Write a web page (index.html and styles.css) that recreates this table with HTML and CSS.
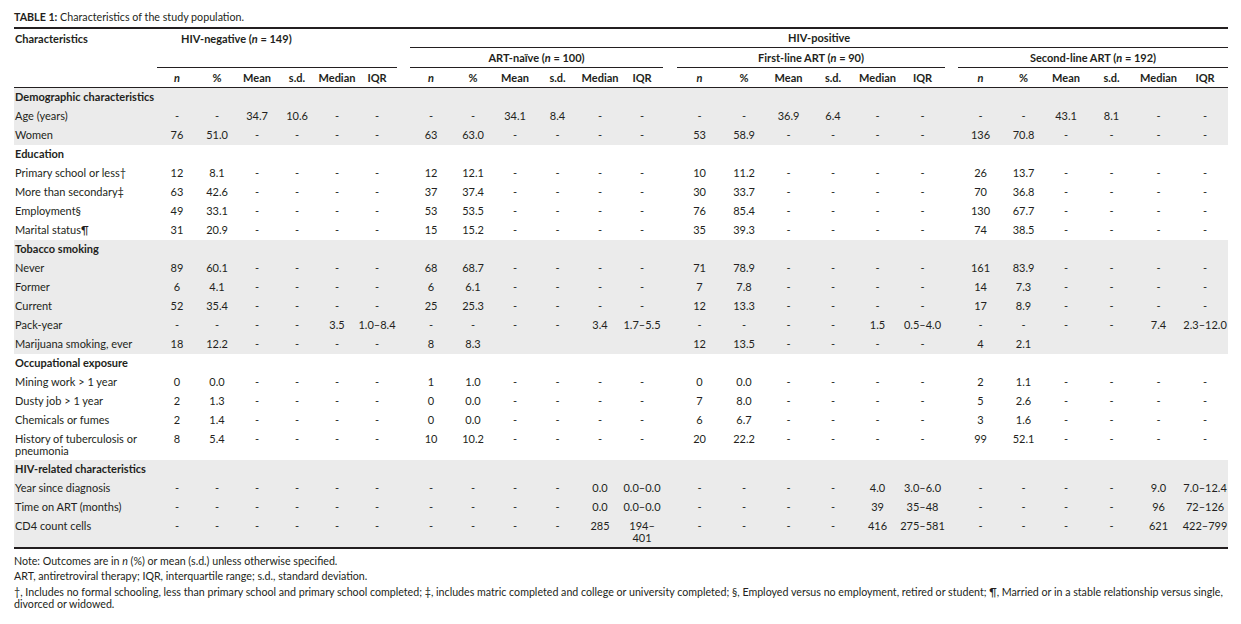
FILE: index.html
```html
<!DOCTYPE html>
<html lang="en">
<head>
<meta charset="utf-8">
<title>Table 1</title>
<link rel="stylesheet" href="styles.css">
</head>
<body>
<div class="page">
  <p class="title"><b>TABLE 1:</b> Characteristics of the study population.</p>
  <table class="data">
    <colgroup>
      <col class="w-char">
      <col class="w40"><col class="w40"><col class="w40"><col class="w40"><col class="w40"><col class="w40">
      <col class="w13">
      <col class="w42"><col class="w42"><col class="w42"><col class="w43"><col class="w42"><col class="w42">
      <col class="w14">
      <col class="w45"><col class="w44"><col class="w45"><col class="w44"><col class="w45"><col class="w45">
      <col class="w13">
      <col class="w45"><col class="w41"><col class="w44"><col class="w47"><col class="w47"><col class="w46">
    </colgroup>
    <thead>
      <tr class="h1">
        <th rowspan="3" class="left top ruled">Characteristics</th>
        <th colspan="6" rowspan="2" class="top ruled neg">HIV-negative (<i>n</i> = 149)</th>
        <th rowspan="2"></th>
        <th colspan="20" class="ruled">HIV-positive</th>
      </tr>
      <tr class="h2">
        <th colspan="6" class="ruled">ART-naïve (<i>n</i> = 100)</th>
        <th></th>
        <th colspan="6" class="ruled">First-line ART (<i>n</i> = 90)</th>
        <th></th>
        <th colspan="6" class="ruled">Second-line ART (<i>n</i> = 192)</th>
      </tr>
      <tr class="h3">
        <th class="ruled"><i>n</i></th><th class="ruled">%</th><th class="ruled">Mean</th><th class="ruled">s.d.</th><th class="ruled">Median</th><th class="ruled">IQR</th>
        <th class="ruled"></th>
        <th class="ruled"><i>n</i></th><th class="ruled">%</th><th class="ruled">Mean</th><th class="ruled">s.d.</th><th class="ruled">Median</th><th class="ruled">IQR</th>
        <th class="ruled"></th>
        <th class="ruled"><i>n</i></th><th class="ruled">%</th><th class="ruled">Mean</th><th class="ruled">s.d.</th><th class="ruled">Median</th><th class="ruled">IQR</th>
        <th class="ruled"></th>
        <th class="ruled"><i>n</i></th><th class="ruled">%</th><th class="ruled">Mean</th><th class="ruled">s.d.</th><th class="ruled">Median</th><th class="ruled">IQR</th>
      </tr>
    </thead>
    <tbody class="shade">
      <tr><td colspan="28" class="cat">Demographic characteristics</td></tr>
      <tr><td class="lab">Age (years)</td><td>-</td><td>-</td><td>34.7</td><td>10.6</td><td>-</td><td>-</td><td></td><td>-</td><td>-</td><td>34.1</td><td>8.4</td><td>-</td><td>-</td><td></td><td>-</td><td>-</td><td>36.9</td><td>6.4</td><td>-</td><td>-</td><td></td><td>-</td><td>-</td><td>43.1</td><td>8.1</td><td>-</td><td>-</td></tr>
      <tr><td class="lab">Women</td><td>76</td><td>51.0</td><td>-</td><td>-</td><td>-</td><td>-</td><td></td><td>63</td><td>63.0</td><td>-</td><td>-</td><td>-</td><td>-</td><td></td><td>53</td><td>58.9</td><td>-</td><td>-</td><td>-</td><td>-</td><td></td><td>136</td><td>70.8</td><td>-</td><td>-</td><td>-</td><td>-</td></tr>
    </tbody>
    <tbody>
      <tr><td colspan="28" class="cat">Education</td></tr>
      <tr><td class="lab">Primary school or less†</td><td>12</td><td>8.1</td><td>-</td><td>-</td><td>-</td><td>-</td><td></td><td>12</td><td>12.1</td><td>-</td><td>-</td><td>-</td><td>-</td><td></td><td>10</td><td>11.2</td><td>-</td><td>-</td><td>-</td><td>-</td><td></td><td>26</td><td>13.7</td><td>-</td><td>-</td><td>-</td><td>-</td></tr>
      <tr><td class="lab">More than secondary‡</td><td>63</td><td>42.6</td><td>-</td><td>-</td><td>-</td><td>-</td><td></td><td>37</td><td>37.4</td><td>-</td><td>-</td><td>-</td><td>-</td><td></td><td>30</td><td>33.7</td><td>-</td><td>-</td><td>-</td><td>-</td><td></td><td>70</td><td>36.8</td><td>-</td><td>-</td><td>-</td><td>-</td></tr>
      <tr><td class="lab">Employment§</td><td>49</td><td>33.1</td><td>-</td><td>-</td><td>-</td><td>-</td><td></td><td>53</td><td>53.5</td><td>-</td><td>-</td><td>-</td><td>-</td><td></td><td>76</td><td>85.4</td><td>-</td><td>-</td><td>-</td><td>-</td><td></td><td>130</td><td>67.7</td><td>-</td><td>-</td><td>-</td><td>-</td></tr>
      <tr><td class="lab">Marital status¶</td><td>31</td><td>20.9</td><td>-</td><td>-</td><td>-</td><td>-</td><td></td><td>15</td><td>15.2</td><td>-</td><td>-</td><td>-</td><td>-</td><td></td><td>35</td><td>39.3</td><td>-</td><td>-</td><td>-</td><td>-</td><td></td><td>74</td><td>38.5</td><td>-</td><td>-</td><td>-</td><td>-</td></tr>
    </tbody>
    <tbody class="shade">
      <tr><td colspan="28" class="cat">Tobacco smoking</td></tr>
      <tr><td class="lab">Never</td><td>89</td><td>60.1</td><td>-</td><td>-</td><td>-</td><td>-</td><td></td><td>68</td><td>68.7</td><td>-</td><td>-</td><td>-</td><td>-</td><td></td><td>71</td><td>78.9</td><td>-</td><td>-</td><td>-</td><td>-</td><td></td><td>161</td><td>83.9</td><td>-</td><td>-</td><td>-</td><td>-</td></tr>
      <tr><td class="lab">Former</td><td>6</td><td>4.1</td><td>-</td><td>-</td><td>-</td><td>-</td><td></td><td>6</td><td>6.1</td><td>-</td><td>-</td><td>-</td><td>-</td><td></td><td>7</td><td>7.8</td><td>-</td><td>-</td><td>-</td><td>-</td><td></td><td>14</td><td>7.3</td><td>-</td><td>-</td><td>-</td><td>-</td></tr>
      <tr><td class="lab">Current</td><td>52</td><td>35.4</td><td>-</td><td>-</td><td>-</td><td>-</td><td></td><td>25</td><td>25.3</td><td>-</td><td>-</td><td>-</td><td>-</td><td></td><td>12</td><td>13.3</td><td>-</td><td>-</td><td>-</td><td>-</td><td></td><td>17</td><td>8.9</td><td>-</td><td>-</td><td>-</td><td>-</td></tr>
      <tr><td class="lab">Pack-year</td><td>-</td><td>-</td><td>-</td><td>-</td><td>3.5</td><td>1.0–8.4</td><td></td><td>-</td><td>-</td><td>-</td><td>-</td><td>3.4</td><td>1.7–5.5</td><td></td><td>-</td><td>-</td><td>-</td><td>-</td><td>1.5</td><td>0.5–4.0</td><td></td><td>-</td><td>-</td><td>-</td><td>-</td><td>7.4</td><td>2.3–12.0</td></tr>
      <tr><td class="lab">Marijuana smoking, ever</td><td>18</td><td>12.2</td><td>-</td><td>-</td><td>-</td><td>-</td><td></td><td>8</td><td>8.3</td><td></td><td></td><td></td><td></td><td></td><td>12</td><td>13.5</td><td>-</td><td>-</td><td>-</td><td>-</td><td></td><td>4</td><td>2.1</td><td></td><td></td><td></td><td></td></tr>
    </tbody>
    <tbody>
      <tr><td colspan="28" class="cat">Occupational exposure</td></tr>
      <tr><td class="lab">Mining work &gt; 1 year</td><td>0</td><td>0.0</td><td>-</td><td>-</td><td>-</td><td>-</td><td></td><td>1</td><td>1.0</td><td>-</td><td>-</td><td>-</td><td>-</td><td></td><td>0</td><td>0.0</td><td>-</td><td>-</td><td>-</td><td>-</td><td></td><td>2</td><td>1.1</td><td>-</td><td>-</td><td>-</td><td>-</td></tr>
      <tr><td class="lab">Dusty job &gt; 1 year</td><td>2</td><td>1.3</td><td>-</td><td>-</td><td>-</td><td>-</td><td></td><td>0</td><td>0.0</td><td>-</td><td>-</td><td>-</td><td>-</td><td></td><td>7</td><td>8.0</td><td>-</td><td>-</td><td>-</td><td>-</td><td></td><td>5</td><td>2.6</td><td>-</td><td>-</td><td>-</td><td>-</td></tr>
      <tr><td class="lab">Chemicals or fumes</td><td>2</td><td>1.4</td><td>-</td><td>-</td><td>-</td><td>-</td><td></td><td>0</td><td>0.0</td><td>-</td><td>-</td><td>-</td><td>-</td><td></td><td>6</td><td>6.7</td><td>-</td><td>-</td><td>-</td><td>-</td><td></td><td>3</td><td>1.6</td><td>-</td><td>-</td><td>-</td><td>-</td></tr>
      <tr><td class="lab">History of tuberculosis or<br>pneumonia</td><td>8</td><td>5.4</td><td>-</td><td>-</td><td>-</td><td>-</td><td></td><td>10</td><td>10.2</td><td>-</td><td>-</td><td>-</td><td>-</td><td></td><td>20</td><td>22.2</td><td>-</td><td>-</td><td>-</td><td>-</td><td></td><td>99</td><td>52.1</td><td>-</td><td>-</td><td>-</td><td>-</td></tr>
    </tbody>
    <tbody class="shade">
      <tr><td colspan="28" class="cat">HIV-related characteristics</td></tr>
      <tr><td class="lab">Year since diagnosis</td><td>-</td><td>-</td><td>-</td><td>-</td><td>-</td><td>-</td><td></td><td>-</td><td>-</td><td>-</td><td>-</td><td>0.0</td><td>0.0–0.0</td><td></td><td>-</td><td>-</td><td>-</td><td>-</td><td>4.0</td><td>3.0–6.0</td><td></td><td>-</td><td>-</td><td>-</td><td>-</td><td>9.0</td><td>7.0–12.4</td></tr>
      <tr><td class="lab">Time on ART (months)</td><td>-</td><td>-</td><td>-</td><td>-</td><td>-</td><td>-</td><td></td><td>-</td><td>-</td><td>-</td><td>-</td><td>0.0</td><td>0.0–0.0</td><td></td><td>-</td><td>-</td><td>-</td><td>-</td><td>39</td><td>35–48</td><td></td><td>-</td><td>-</td><td>-</td><td>-</td><td>96</td><td>72–126</td></tr>
      <tr><td class="lab">CD4 count cells</td><td>-</td><td>-</td><td>-</td><td>-</td><td>-</td><td>-</td><td></td><td>-</td><td>-</td><td>-</td><td>-</td><td>285</td><td>194–<br>401</td><td></td><td>-</td><td>-</td><td>-</td><td>-</td><td>416</td><td>275–581</td><td></td><td>-</td><td>-</td><td>-</td><td>-</td><td>621</td><td>422–799</td></tr>
    </tbody>
  </table>
  <div class="notes">
    <p class="n1">Note: Outcomes are in <i>n</i> (%) or mean (s.d.) unless otherwise specified.</p>
    <p class="n2">ART, antiretroviral therapy; IQR, interquartile range; s.d., standard deviation.</p>
    <p class="n3">†, Includes no formal schooling, less than primary school and primary school completed; ‡, includes matric completed and college or university completed; §, Employed versus no employment, retired or student; ¶, Married or in a stable relationship versus single, divorced or widowed.</p>
  </div>
</div>
</body>
</html>
```

FILE: styles.css
```css
html, body {
  margin: 0;
  padding: 0;
  background: #ffffff;
}

.page {
  padding: 10px 12px 0 14px;
  font-family: Lato, "Open Sans", "Liberation Sans", sans-serif;
  color: #231f20;
  font-size: 11px;
}

.title {
  margin: 0 0 3px 0;
  font-size: 10.7px;
  line-height: 14px;
}

.data {
  width: 1214px;
  table-layout: fixed;
  border-collapse: separate;
  border-spacing: 0;
  border-top: 2px solid #231f20;
  border-bottom: 2px solid #231f20;
  font-size: 11px;
}

.w-char { width: 143px; }
.w13 { width: 13px; }
.w14 { width: 14px; }
.w40 { width: 40px; }
.w41 { width: 41px; }
.w42 { width: 42px; }
.w43 { width: 43px; }
.w44 { width: 44px; }
.w45 { width: 45px; }
.w46 { width: 46px; }
.w47 { width: 47px; }

.data th {
  font-weight: bold;
  padding: 0;
  line-height: 12px;
  text-align: center;
  vertical-align: middle;
  white-space: nowrap;
}

.data th.left {
  text-align: left;
  padding-left: 1px;
}

.data th.top {
  vertical-align: top;
  padding-top: 4px;
}

.data th.neg {
  text-align: left;
  padding-left: 24px;
}

.data th.ruled {
  border-bottom: 1px solid #231f20;
}

.h1 { height: 19px; }
.h2 { height: 20px; }
.h3 { height: 20px; }

.data td {
  padding: 3px 0 3px 0;
  line-height: 12px;
  text-align: center;
  vertical-align: top;
  white-space: nowrap;
}

.data tbody tr { height: 19px; }

.data td.lab,
.data td.cat {
  text-align: left;
  padding-left: 1px;
}

.data td.cat {
  font-weight: bold;
}

.shade td {
  background: #ebebeb;
}

.notes {
  width: 1216px;
  font-size: 10.66px;
  line-height: 12px;
}

.notes p {
  margin: 0;
}

.notes .n1 { margin-top: 6px; }
.notes .n2 { margin-top: 3px; }
.notes .n3 { margin-top: 4px; }
```
